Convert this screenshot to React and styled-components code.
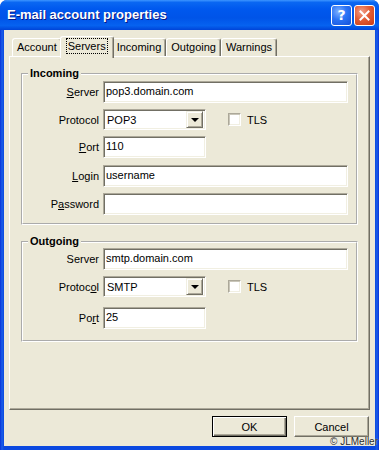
import React from "react";
import styled, { createGlobalStyle } from "styled-components";

const GlobalStyle = createGlobalStyle`
  html, body {
    margin: 0;
    padding: 0;
    background: #fff;
  }
  body {
    font-family: "Liberation Sans", Arial, sans-serif;
    font-size: 11px;
    color: #000;
  }
`;

const Window = styled.div`
  position: relative;
  width: 379px;
  height: 450px;
  display: flex;
  flex-direction: column;
  border-radius: 7px 7px 0 0;
  overflow: hidden;
  background: #0a3fd6;
`;

const TitleBar = styled.div`
  height: 30px;
  flex: none;
  display: flex;
  align-items: center;
  padding: 0 4px 0 7px;
  box-sizing: border-box;
  background: linear-gradient(
    to bottom,
    #3d95ff 0%,
    #0a67f2 8%,
    #0058ee 30%,
    #0054e8 60%,
    #0662f0 85%,
    #0044d8 100%
  );
`;

const Title = styled.div`
  flex: 1;
  color: #fff;
  font-family: "Liberation Sans", Arial, sans-serif;
  font-weight: bold;
  font-size: 13px;
  text-shadow: 1px 1px #0a1883;
  padding-bottom: 1px;
`;

const CaptionButton = styled.div`
  width: 21px;
  height: 21px;
  box-sizing: border-box;
  margin-left: 2px;
  border: 1px solid #fff;
  border-radius: 3px;
  display: flex;
  align-items: center;
  justify-content: center;
  color: #fff;
  font-family: "DejaVu Sans", Verdana, sans-serif;
  font-weight: bold;
  font-size: 14px;
  background: ${(p) =>
    p.$close
      ? "radial-gradient(circle at 35% 30%, #f3a08a 0%, #e25d36 45%, #c83a14 100%)"
      : "radial-gradient(circle at 35% 30%, #7fb2ff 0%, #2b73f5 45%, #1450d8 100%)"};
`;

const Frame = styled.div`
  flex: 1;
  display: flex;
  padding: 0 4px 4px 4px;
  background: linear-gradient(to right, #0831d9 0, #1a5ee8 2px, #0a48e0 4px, #0a48e0 calc(100% - 4px), #1a5ee8 calc(100% - 2px), #0831d9 100%);
`;

const Client = styled.div`
  flex: 1;
  display: flex;
  flex-direction: column;
  background: #ece9d8;
  padding: 6px 5px 0 5px;
`;

const TabRow = styled.div`
  display: flex;
  align-items: flex-end;
  height: 20px;
  padding-left: 3px;
  position: relative;
  z-index: 1;
`;

const Tab = styled.div`
  box-sizing: border-box;
  height: ${(p) => (p.$active ? "22px" : "18px")};
  margin: ${(p) => (p.$active ? "0 -2px -2px -2px" : "0")};
  padding: ${(p) => (p.$active ? "2px 6px 0 6px" : "1px 4px 0 4px")};
  display: flex;
  align-items: flex-start;
  justify-content: center;
  background: #ece9d8;
  border-top: 1px solid #fff;
  border-left: 1px solid #fff;
  border-right: 1px solid #716f64;
  box-shadow: inset -1px 0 #aca899;
  border-radius: 3px 3px 0 0;
  position: relative;
  z-index: ${(p) => (p.$active ? 2 : 1)};
  line-height: 14px;
  white-space: nowrap;
`;

const Focus = styled.span`
  outline: 1px dotted #000;
  outline-offset: 0;
  padding: 0 1px;
`;

const Panel = styled.div`
  height: 354px;
  box-sizing: border-box;
  display: flex;
  flex-direction: column;
  padding: 10px 11px 0 11px;
  border-top: 1px solid #fff;
  border-left: 1px solid #fff;
  border-right: 1px solid #716f64;
  border-bottom: 1px solid #716f64;
  box-shadow: inset -1px -1px #aca899;
`;

const Group = styled.fieldset`
  margin: 0 0 ${(p) => p.$gap || 0}px 0;
  padding: 0 0 ${(p) => p.$pb || 0}px 0;
  border: 2px groove #fff;
  display: flex;
  flex-direction: column;
`;

const Legend = styled.legend`
  font-weight: bold;
  font-size: 11px;
  line-height: 13px;
  margin-left: 5px;
  padding: 0 2px;
`;

const Row = styled.div`
  display: flex;
  align-items: center;
  margin-top: ${(p) => p.$mt || 0}px;
`;

const Label = styled.label`
  width: 76px;
  margin-right: 4px;
  text-align: right;
  white-space: nowrap;
`;

const Key = styled.u`
  text-decoration: underline;
  text-underline-offset: 1px;
`;

const Field = styled.input`
  box-sizing: border-box;
  width: ${(p) => p.$w}px;
  height: 22px;
  margin: 0;
  padding: 0 2px 2px 2px;
  font-family: "Liberation Sans", Arial, sans-serif;
  font-size: 11px;
  color: #000;
  background: #fff;
  border: 1px solid;
  border-color: #aca899 #fff #fff #aca899;
  box-shadow: inset 1px 1px #716f64, inset -1px -1px #f1efe2;
  outline: none;
`;

const Select = styled.div`
  box-sizing: border-box;
  width: 103px;
  height: 21px;
  display: flex;
  align-items: center;
  padding: 2px;
  background: #fff;
  border: 1px solid;
  border-color: #aca899 #fff #fff #aca899;
  box-shadow: inset 1px 1px #716f64, inset -1px -1px #f1efe2;
`;

const SelectText = styled.span`
  flex: 1;
  padding-left: 1px;
`;

const DropButton = styled.div`
  width: 17px;
  height: 17px;
  box-sizing: border-box;
  display: flex;
  align-items: center;
  justify-content: center;
  background: #ece9d8;
  border: 1px solid;
  border-color: #f1efe2 #716f64 #716f64 #f1efe2;
  box-shadow: inset 1px 1px #fff, inset -1px -1px #aca899;
`;

const Arrow = styled.span`
  width: 0;
  height: 0;
  border-left: 4px solid transparent;
  border-right: 4px solid transparent;
  border-top: 4px solid #000;
  margin-top: 1px;
`;

const Check = styled.span`
  width: 13px;
  height: 13px;
  box-sizing: border-box;
  margin-left: 22px;
  margin-right: 6px;
  background: #fff;
  border: 1px solid;
  border-color: #aca899 #fff #fff #aca899;
  box-shadow: inset 1px 1px #c9c6b9, inset -1px -1px #f1efe2;
`;

const ButtonRow = styled.div`
  display: flex;
  justify-content: flex-end;
  gap: 7px;
  padding: 6px 1px 0 0;
`;

const Button = styled.div`
  width: 75px;
  height: 21px;
  box-sizing: border-box;
  display: flex;
  align-items: center;
  justify-content: center;
  background: #ece9d8;
  border: 1px solid;
  border-color: ${(p) => (p.$default ? "#000" : "#fff #716f64 #716f64 #fff")};
  box-shadow: ${(p) =>
    p.$default
      ? "inset 1px 1px #fff, inset -1px -1px #716f64, inset -2px -2px #aca899"
      : "inset -1px -1px #aca899"};
`;

const Watermark = styled.div`
  position: absolute;
  right: 1px;
  bottom: 3px;
  font-size: 10px;
  line-height: 11px;
  color: #2a2a2a;
  text-shadow: 0 0 1px #fff;
`;

function withKey(label, keyAt) {
  if (keyAt == null) return label;
  return (
    <>
      {label.slice(0, keyAt)}
      <Key>{label[keyAt]}</Key>
      {label.slice(keyAt + 1)}
    </>
  );
}

function Input({ label, keyAt, value = "", width = 245, mt }) {
  return (
    <Row $mt={mt}>
      <Label>{withKey(label, keyAt)}</Label>
      <Field readOnly value={value} $w={width} />
    </Row>
  );
}

function Protocol({ value, keyAt, mt }) {
  return (
    <Row $mt={mt}>
      <Label>{withKey("Protocol", keyAt)}</Label>
      <Select>
        <SelectText>{value}</SelectText>
        <DropButton>
          <Arrow />
        </DropButton>
      </Select>
      <Check />
      <span>TLS</span>
    </Row>
  );
}

export default function App() {
  return (
    <>
      <GlobalStyle />
      <Window>
        <TitleBar>
          <Title>E-mail account properties</Title>
          <CaptionButton>?</CaptionButton>
          <CaptionButton $close>
            <svg width="11" height="11" viewBox="0 0 11 11">
              <path d="M1.5 1.5 L9.5 9.5 M9.5 1.5 L1.5 9.5" stroke="#fff" strokeWidth="2" strokeLinecap="square" />
            </svg>
          </CaptionButton>
        </TitleBar>
        <Frame>
          <Client>
            <TabRow>
              <Tab>Account</Tab>
              <Tab $active>
                <Focus>Servers</Focus>
              </Tab>
              <Tab>Incoming</Tab>
              <Tab>Outgoing</Tab>
              <Tab>Warnings</Tab>
            </TabRow>
            <Panel>
              <Group $pb={8} $gap={10}>
                <Legend>Incoming</Legend>
                <Input label="Server" keyAt={0} value="pop3.domain.com" mt={1} />
                <Protocol value="POP3" mt={6} />
                <Input label="Port" keyAt={0} value="110" width={103} mt={6} />
                <Input label="Login" keyAt={0} value="username" mt={7} />
                <Input label="Password" keyAt={1} mt={6} />
              </Group>
              <Group $pb={11}>
                <Legend>Outgoing</Legend>
                <Input label="Server" value="smtp.domain.com" mt={0} />
                <Protocol value="SMTP" keyAt={6} mt={6} />
                <Input label="Port" keyAt={2} value="25" width={103} mt={10} />
              </Group>
            </Panel>
            <ButtonRow>
              <Button $default>OK</Button>
              <Button>Cancel</Button>
            </ButtonRow>
          </Client>
        </Frame>
        <Watermark>© JLMeller</Watermark>
      </Window>
    </>
  );
}
